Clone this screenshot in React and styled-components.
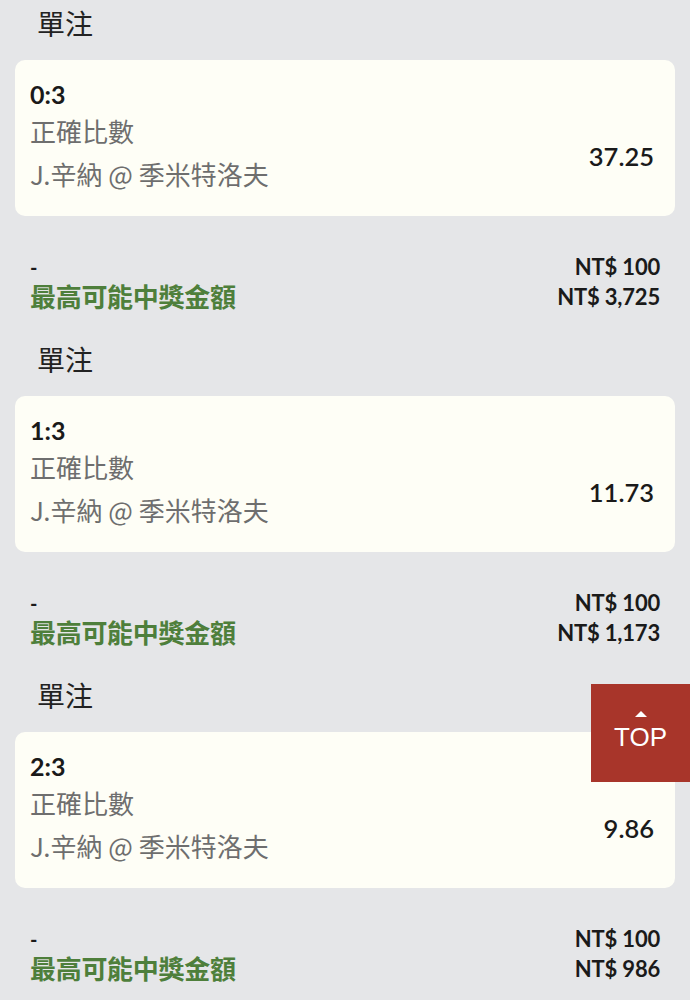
import React from "react";
import styled, { createGlobalStyle } from "styled-components";

const GlobalStyle = createGlobalStyle`
  html, body {
    margin: 0;
    padding: 0;
    background: #e5e6e8;
  }
  body {
    font-family: "Lato", "Noto Sans CJK TC", sans-serif;
    color: #1a1a1a;
  }
`;

const bets = [
  { score: "0:3", odds: "37.25", stake: "NT$ 100", payout: "NT$ 3,725" },
  { score: "1:3", odds: "11.73", stake: "NT$ 100", payout: "NT$ 1,173" },
  { score: "2:3", odds: "9.86", stake: "NT$ 100", payout: "NT$ 986" },
];

const Page = styled.div`
  padding: 0 15px;
  width: 660px;
`;

const Title = styled.div`
  font-family: "Noto Sans CJK TC", sans-serif;
  font-size: 28px;
  line-height: 36px;
  padding: 5px 0 19px 22px;
  color: #222;
`;

const Card = styled.div`
  background: #fefef6;
  border-radius: 10px;
  height: 156px;
  box-sizing: border-box;
  padding: 19px 21px 0 15px;
  display: grid;
  grid-template-columns: 1fr auto;
  grid-template-rows: 30px 41px 43px;
`;

const Score = styled.div`
  font-family: "Lato", sans-serif;
  font-weight: 700;
  font-size: 25px;
  line-height: 30px;
  grid-column: 1;
`;

const Grey = styled.div`
  font-family: "Noto Sans CJK TC", sans-serif;
  font-size: 26px;
  line-height: 38px;
  color: #6e6e6e;
  grid-column: 1;
  align-self: end;
`;

const Odds = styled.div`
  grid-column: 2;
  grid-row: 2 / 4;
  align-self: center;
  font-family: "Lato", sans-serif;
  font-weight: 600;
  font-size: 25.5px;
  margin-top: 10px;
`;

const Footer = styled.div`
  height: 120px;
  box-sizing: border-box;
  padding: 36px 15px 0 15px;
  display: grid;
  grid-template-columns: 1fr auto;
  grid-template-rows: 30px 30px;
  align-items: center;
`;

const Dash = styled.div`
  font-family: "Lato", sans-serif;
  font-weight: 700;
  font-size: 20px;
  line-height: 24px;
`;

const Label = styled.div`
  font-family: "Noto Sans CJK TC", sans-serif;
  font-weight: 700;
  font-size: 26px;
  line-height: 26px;
  color: #4e7f3b;
  letter-spacing: -0.3px;
  align-self: start;
  margin-top: 1px;
`;

const Amount = styled.div`
  font-family: "Lato", sans-serif;
  font-weight: 700;
  font-size: 22px;
  line-height: 28px;
  text-align: right;
  letter-spacing: -0.2px;
`;

const TopButton = styled.div`
  position: fixed;
  right: 0;
  top: 684px;
  width: 99px;
  height: 98px;
  background: #a8352a;
  color: #fff;
  display: flex;
  flex-direction: column;
  align-items: center;
  justify-content: center;
  gap: 5px;
  font-family: "Liberation Sans", sans-serif;
  font-size: 26px;
  padding-bottom: 2px;
  box-sizing: border-box;
`;

const Arrow = styled.div`
  width: 0;
  height: 0;
  border-left: 6px solid transparent;
  border-right: 6px solid transparent;
  border-bottom: 6px solid #fff;
`;

export default function App() {
  return (
    <>
      <GlobalStyle />
      <Page>
        {bets.map((b) => (
          <section key={b.score}>
            <Title>單注</Title>
            <Card>
              <Score>{b.score}</Score>
              <Grey>正確比數</Grey>
              <Grey>J.辛納 @ 季米特洛夫</Grey>
              <Odds>{b.odds}</Odds>
            </Card>
            <Footer>
              <Dash>-</Dash>
              <Amount>{b.stake}</Amount>
              <Label>最高可能中獎金額</Label>
              <Amount>{b.payout}</Amount>
            </Footer>
          </section>
        ))}
      </Page>
      <TopButton>
        <Arrow />
        <span>TOP</span>
      </TopButton>
    </>
  );
}
